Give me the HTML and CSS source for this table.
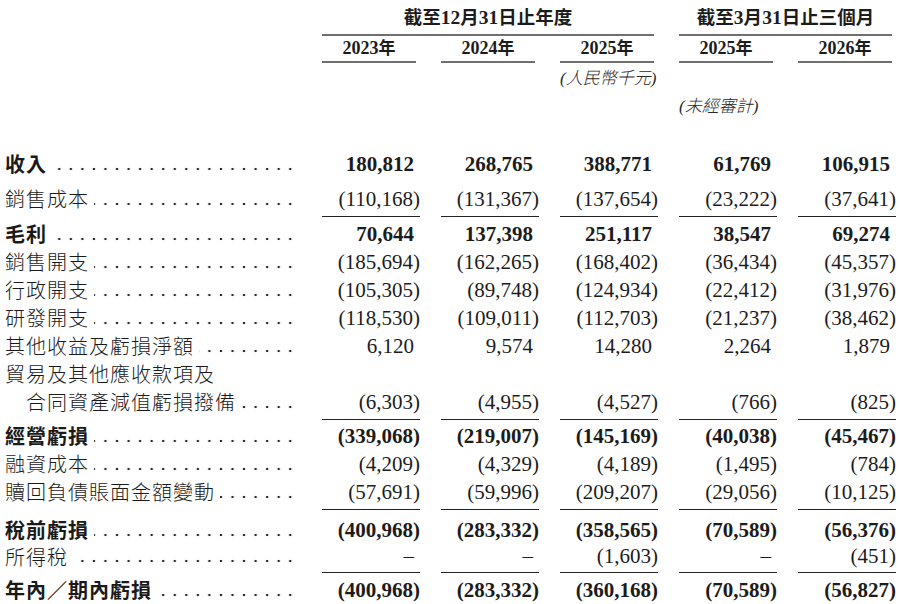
FILE: index.html
```html
<!DOCTYPE html>
<html lang="zh-Hant">
<head>
<meta charset="utf-8">
<link rel="stylesheet" href="styles.css">
</head>
<body>
<div class="sheet">
  <div class="grid hdr1">
    <div></div>
    <div class="grp g1">截至<span class="d">12</span>月<span class="d">31</span>日止年度</div>
    <div class="grp g2">截至<span class="d">3</span>月<span class="d">31</span>日止三個月</div>
  </div>
  <div class="grid hdr2">
    <div></div>
    <div class="yr"><span class="d">2023</span>年</div>
    <div class="yr"><span class="d">2024</span>年</div>
    <div class="yr"><span class="d">2025</span>年</div>
    <div class="yr"><span class="d">2025</span>年</div>
    <div class="yr"><span class="d">2026</span>年</div>
  </div>
  <div class="grid note1">
    <div></div><div></div><div></div>
    <div class="unit"><span class="pp">(</span>人民幣千元<span class="pp">)</span></div>
    <div></div><div></div>
  </div>
  <div class="grid note2">
    <div></div><div></div><div></div><div></div>
    <div class="audit"><span class="pp">(</span>未經審計<span class="pp">)</span></div>
    <div></div>
  </div>

  <div class="body">
    <div class="grid row bold first">
      <div class="lbl"><span class="t">收入</span><span class="dots"></span></div>
      <div class="n p">180,812</div><div class="n p">268,765</div><div class="n p">388,771</div><div class="n p">61,769</div><div class="n p">106,915</div>
    </div>
    <div class="grid row ul">
      <div class="lbl"><span class="t">銷售成本</span><span class="dots"></span></div>
      <div class="n">(110,168)</div><div class="n">(131,367)</div><div class="n">(137,654)</div><div class="n">(23,222)</div><div class="n">(37,641)</div>
    </div>
    <div class="grid row bold">
      <div class="lbl"><span class="t">毛利</span><span class="dots"></span></div>
      <div class="n p">70,644</div><div class="n p">137,398</div><div class="n p">251,117</div><div class="n p">38,547</div><div class="n p">69,274</div>
    </div>
    <div class="grid row">
      <div class="lbl"><span class="t">銷售開支</span><span class="dots"></span></div>
      <div class="n">(185,694)</div><div class="n">(162,265)</div><div class="n">(168,402)</div><div class="n">(36,434)</div><div class="n">(45,357)</div>
    </div>
    <div class="grid row">
      <div class="lbl"><span class="t">行政開支</span><span class="dots"></span></div>
      <div class="n">(105,305)</div><div class="n">(89,748)</div><div class="n">(124,934)</div><div class="n">(22,412)</div><div class="n">(31,976)</div>
    </div>
    <div class="grid row">
      <div class="lbl"><span class="t">研發開支</span><span class="dots"></span></div>
      <div class="n">(118,530)</div><div class="n">(109,011)</div><div class="n">(112,703)</div><div class="n">(21,237)</div><div class="n">(38,462)</div>
    </div>
    <div class="grid row">
      <div class="lbl"><span class="t">其他收益及虧損淨額</span><span class="dots"></span></div>
      <div class="n p">6,120</div><div class="n p">9,574</div><div class="n p">14,280</div><div class="n p">2,264</div><div class="n p">1,879</div>
    </div>
    <div class="grid row">
      <div class="lbl"><span class="t">貿易及其他應收款項及</span></div>
      <div></div><div></div><div></div><div></div><div></div>
    </div>
    <div class="grid row ul">
      <div class="lbl indent"><span class="t">合同資產減值虧損撥備</span><span class="dots"></span></div>
      <div class="n">(6,303)</div><div class="n">(4,955)</div><div class="n">(4,527)</div><div class="n">(766)</div><div class="n">(825)</div>
    </div>
    <div class="grid row bold">
      <div class="lbl"><span class="t">經營虧損</span><span class="dots"></span></div>
      <div class="n">(339,068)</div><div class="n">(219,007)</div><div class="n">(145,169)</div><div class="n">(40,038)</div><div class="n">(45,467)</div>
    </div>
    <div class="grid row">
      <div class="lbl"><span class="t">融資成本</span><span class="dots"></span></div>
      <div class="n">(4,209)</div><div class="n">(4,329)</div><div class="n">(4,189)</div><div class="n">(1,495)</div><div class="n">(784)</div>
    </div>
    <div class="grid row ul wide">
      <div class="lbl"><span class="t">贖回負債賬面金額變動</span><span class="dots"></span></div>
      <div class="n">(57,691)</div><div class="n">(59,996)</div><div class="n">(209,207)</div><div class="n">(29,056)</div><div class="n">(10,125)</div>
    </div>
    <div class="grid row bold">
      <div class="lbl"><span class="t">稅前虧損</span><span class="dots"></span></div>
      <div class="n">(400,968)</div><div class="n">(283,332)</div><div class="n">(358,565)</div><div class="n">(70,589)</div><div class="n">(56,376)</div>
    </div>
    <div class="grid row ul short">
      <div class="lbl"><span class="t">所得稅</span><span class="dots"></span></div>
      <div class="n p">–</div><div class="n p">–</div><div class="n">(1,603)</div><div class="n p">–</div><div class="n">(451)</div>
    </div>
    <div class="grid row bold">
      <div class="lbl"><span class="t">年內／期內虧損</span><span class="dots"></span></div>
      <div class="n">(400,968)</div><div class="n">(283,332)</div><div class="n">(360,168)</div><div class="n">(70,589)</div><div class="n">(56,827)</div>
    </div>
  </div>
</div>
</body>
</html>
```

FILE: styles.css
```css
html, body {
  margin: 0;
  padding: 0;
  background: #ffffff;
  overflow: hidden;
}

body {
  padding-left: 5px;
  font-family: "Liberation Serif", "Noto Sans CJK TC", serif;
  color: #1c1c1c;
}

.grid {
  display: grid;
  grid-template-columns: 292px repeat(5, 94px);
  column-gap: 25px;
}

/* header */
.hdr1 {
  height: 34px;
}

.grp {
  font-family: "Noto Sans CJK TC", sans-serif;
  font-weight: 700;
  font-size: 18.5px;
  line-height: 32px;
  text-align: center;
  border-bottom: 2px solid #6f6f6f;
  white-space: nowrap;
}

.grp .d {
  font-size: 19.5px;
}

.g1 { grid-column: 2 / 5; }
.g2 { grid-column: 5 / 7; }

.d {
  font-family: "Liberation Serif", serif;
  font-weight: 700;
  font-size: 18px;
}

.hdr2 {
  height: 28px;
}

.yr {
  font-family: "Noto Sans CJK TC", sans-serif;
  font-weight: 700;
  font-size: 17px;
  line-height: 26px;
  text-align: center;
  border-bottom: 2px solid #6f6f6f;
}

.note1 {
  height: 26px;
  margin-top: 2px;
}

.note2 {
  height: 29px;
}

.unit, .audit {
  font-family: "Noto Sans CJK TC", sans-serif;
  font-weight: 300;
  font-style: italic;
  font-size: 17px;
  line-height: 26px;
  color: #2a2a2a;
  white-space: nowrap;
}

.unit {
  text-align: right;
  margin-right: 2px;
}

.audit {
  line-height: 29px;
}

.pp {
  font-family: "Liberation Serif", serif;
  font-style: italic;
}

/* body rows */
.body {
  margin-top: 31px;
}

.row {
  height: 28px;
  line-height: 28px;
}

.row.first {
  margin-bottom: 7px;
}

.row.ul {
  height: auto;
  margin-bottom: 2.5px;
}

.row.ul.wide {
  margin-bottom: 6px;
}

.row.ul .n {
  padding-bottom: 3px;
  border-bottom: 1.5px solid #222;
}

.row.short {
  line-height: 25px;
}

.lbl {
  display: flex;
  align-items: baseline;
  font-family: "Noto Sans CJK TC", sans-serif;
  font-weight: 300;
  font-size: 20px;
  letter-spacing: 1px;
  white-space: nowrap;
  min-width: 0;
  color: #1a1a1a;
}

.lbl.indent {
  padding-left: 21px;
}

.t {
  flex: none;
}

.dots {
  flex: 1;
  align-self: stretch;
  margin-left: 5px;
  margin-right: 1px;
  background-image: radial-gradient(circle, #2a2a2a 1.1px, rgba(0,0,0,0) 1.6px);
  background-size: 11.55px 4px;
  background-repeat: repeat-x;
  background-position: right 0 bottom 7px;
}

.row.ul .dots {
  background-position: right 0 bottom 11px;
}

.row.short .dots {
  background-position: right 0 bottom 10px;
}

.n {
  font-size: 21px;
  text-align: right;
  white-space: nowrap;
  margin-right: -4px;
}

.n.p {
  padding-right: 6px;
}

.bold .lbl,
.bold .n {
  font-weight: 700;
}
```
